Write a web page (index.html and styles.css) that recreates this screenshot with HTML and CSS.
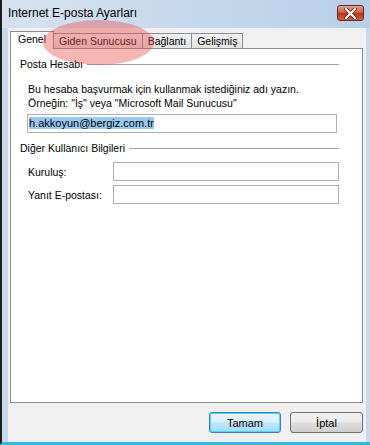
FILE: index.html
```html
<!DOCTYPE html>
<html lang="tr">
<head>
    <meta charset="UTF-8">
    <title>Internet E-posta Ayarları</title>
    <link rel="stylesheet" href="styles.css">
</head>
<body>
    <div class="window">
        <div class="titlebar">
            <span class="title">Internet E-posta Ayarları</span>
            <button class="close" aria-label="Kapat">
                <svg width="13" height="11" viewBox="0 0 13 11">
                    <path d="M2 1 L11 10 M11 1 L2 10" stroke="#5a1a10" stroke-width="3.6" stroke-linecap="round"/>
                    <path d="M2 1 L11 10 M11 1 L2 10" stroke="#ffffff" stroke-width="2.2" stroke-linecap="round"/>
                </svg>
            </button>
        </div>
        <div class="client">
            <div class="tabs">
                <div class="tab active">Genel</div>
                <div class="tab">Giden Sunucusu</div>
                <div class="tab">Bağlantı</div>
                <div class="tab">Gelişmiş</div>
            </div>
            <div class="panel">
                <div class="group-title"><span>Posta Hesabı</span></div>
                <div class="group">
                    <p class="hint">Bu hesaba başvurmak için kullanmak istediğiniz adı yazın.<br>Örneğin: "İş" veya "Microsoft Mail Sunucusu"</p>
                    <div class="field wide"><span class="selected">h.akkoyun@bergiz.com.tr</span></div>
                </div>
                <div class="group-title"><span>Diğer Kullanıcı Bilgileri</span></div>
                <div class="group">
                    <div class="row">
                        <label>Kuruluş:</label>
                        <div class="field"></div>
                    </div>
                    <div class="row">
                        <label>Yanıt E-postası:</label>
                        <div class="field"></div>
                    </div>
                </div>
            </div>
            <div class="actions">
                <button class="btn default">Tamam</button>
                <button class="btn">İptal</button>
            </div>
        </div>
        <div class="highlight"></div>
    </div>
</body>
</html>
```

FILE: styles.css
```css
body {
    margin: 0;
    padding: 0;
    background-color: #f0f0f0;
    font-family: "Liberation Sans", Arial, sans-serif;
    font-size: 10.5px;
    color: #000;
}

.window {
    position: relative;
    width: 370px;
    height: 445px;
    box-sizing: border-box;
    border-left: 2px solid #1c1c1c;
    border-bottom: 3px solid #35b6dc;
    background-color: #c9d9ec;
    display: flex;
    flex-direction: column;
    overflow: hidden;
}

.titlebar {
    height: 28px;
    flex: none;
    display: flex;
    align-items: flex-start;
    justify-content: space-between;
    background: linear-gradient(to right, #d6e2f0, #c4d7ec 60%, #b8cfe8);
}

.title {
    margin: 6px 0 0 6px;
    font-size: 12px;
    color: #000;
}

.close {
    margin: 5px 6px 0 0;
    width: 27px;
    height: 16px;
    padding: 0;
    border: 1px solid #6b2518;
    border-radius: 3px;
    background: linear-gradient(to bottom, #e8a090, #d0604a 45%, #b8321c 55%, #d0624a);
    display: flex;
    align-items: center;
    justify-content: center;
}

.client {
    flex: 1;
    margin: 0 4px 0 6px;
    padding: 3px 3px 0 2px;
    background-color: #f0f0f0;
    display: flex;
    flex-direction: column;
}

.tabs {
    display: flex;
    height: 17px;
    padding-left: 1px;
    position: relative;
    z-index: 1;
}

.tab {
    margin-top: 2px;
    height: 15px;
    box-sizing: border-box;
    padding: 0 5px;
    line-height: 14px;
    border: 1px solid #898c95;
    border-bottom: none;
    margin-left: -1px;
    background: linear-gradient(to bottom, #f2f2f2, #e3e3e3);
}

.tab.active {
    margin-top: 0;
    height: 18px;
    width: 44px;
    padding: 0 0 0 7px;
    background: #fff;
    line-height: 15px;
}

.panel {
    height: 355px;
    box-sizing: border-box;
    border: 1px solid #898c95;
    background-color: #fff;
    padding: 8px 23px 0 9px;
}

.group-title {
    display: flex;
    align-items: center;
    gap: 4px;
    height: 14px;
}

.group-title::after {
    content: "";
    flex: 1;
    border-top: 1px solid #a0a0a0;
}

.group {
    padding: 0 0 0 8px;
}

.hint {
    margin: 11px 0 0 0;
    line-height: 14px;
}

.field {
    height: 19px;
    box-sizing: border-box;
    border: 1px solid #abadb3;
    background: #fff;
    flex: 1;
}

.field.wide {
    margin: 4px 2px 0 -1px;
    padding: 1px 0 0 1px;
    line-height: 15px;
    font-size: 11px;
}

.selected {
    background-color: #99c9ef;
}

.group-title + .group + .group-title {
    margin-top: 8px;
}

.row {
    display: flex;
    align-items: center;
    margin-top: 4px;
}

.group-title + .group .row:first-child {
    margin-top: 7px;
}

.row label {
    width: 85px;
}

.actions {
    display: flex;
    justify-content: flex-end;
    gap: 9px;
    margin-top: 9px;
}

.btn {
    width: 73px;
    height: 21px;
    padding: 0;
    font-family: "Liberation Sans", Arial, sans-serif;
    font-size: 11px;
    border: 1px solid #707070;
    border-radius: 3px;
    background: linear-gradient(to bottom, #f2f2f2, #ebebeb 48%, #dddddd 52%, #cfcfcf);
}

.btn.default {
    width: 72px;
    border-color: #3c7fb1;
    box-shadow: inset 0 0 0 1px #48d8fb;
    background: linear-gradient(to bottom, #eaf6fd, #d9f0fc 48%, #bee6fd 52%, #a7d9f5);
}

.highlight {
    position: absolute;
    left: 41px;
    top: 20px;
    width: 111px;
    height: 45px;
    border-radius: 50%;
    background-color: rgba(232, 80, 80, 0.42);
    z-index: 2;
}
```
